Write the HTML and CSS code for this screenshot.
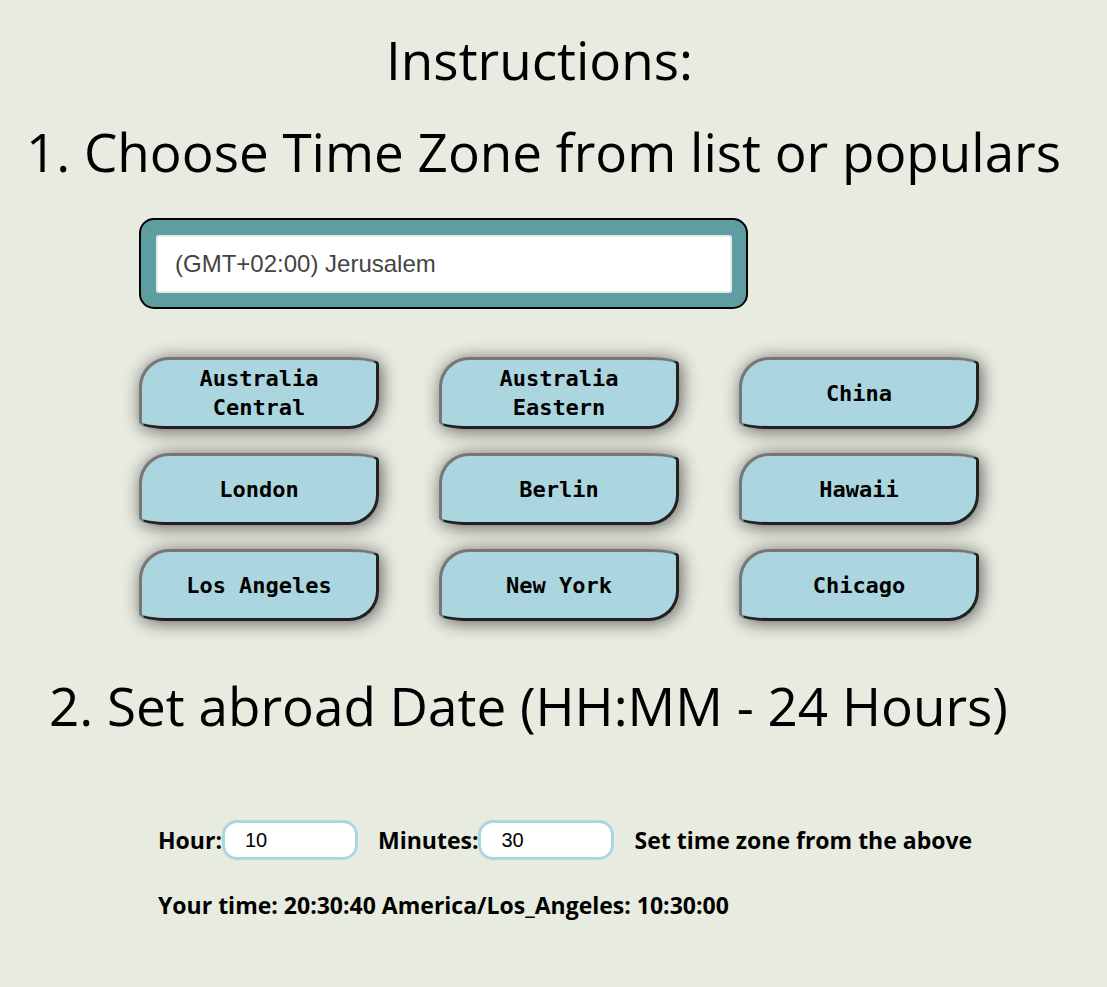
FILE: index.html
```html
<!DOCTYPE html>
<html lang="en">
<head>
<meta charset="utf-8">
<title>Time Zone Converter</title>
<link rel="stylesheet" href="styles.css">
</head>
<body>
<main class="page">
  <h1 class="heading heading-main">Instructions:</h1>
  <h2 class="heading heading-choose">1. Choose Time Zone from list or populars</h2>
  <div class="picker">
    <select class="zone-select" aria-label="Time zone">
      <option>(GMT+02:00) Jerusalem</option>
    </select>
  </div>
  <div class="zones">
    <button class="zone" type="button">Australia Central</button>
    <button class="zone" type="button">Australia Eastern</button>
    <button class="zone" type="button">China</button>
    <button class="zone" type="button">London</button>
    <button class="zone" type="button">Berlin</button>
    <button class="zone" type="button">Hawaii</button>
    <button class="zone" type="button">Los Angeles</button>
    <button class="zone" type="button">New York</button>
    <button class="zone" type="button">Chicago</button>
  </div>
  <h2 class="heading heading-set">2. Set abroad Date (HH:MM - 24 Hours)</h2>
  <form class="time-form">
    <label class="field">Hour:<input class="time-input" type="text" value="10"></label>
    <label class="field">Minutes:<input class="time-input" type="text" value="30"></label>
    <span>Set time zone from the above</span>
  </form>
  <p class="result">Your time: 20:30:40 America/Los_Angeles: 10:30:00</p>
</main>
</body>
</html>
```
FILE: styles.css
```css
* { box-sizing: border-box; }
body {
  margin: 0;
  background: #e8ebe0;
  color: #000;
  font-family: "Open Sans", "Noto Sans", sans-serif;
}
.page { padding: 14px 20px 64px; }
.heading {
  margin: 0;
  font-size: 53px;
  font-weight: 400;
  line-height: 92px;
  text-align: center;
  white-space: nowrap;
}
.heading-main { padding-right: 28px; }
.heading-choose { padding-right: 20px; }
.heading-set { margin-top: 39px; padding-right: 50px; }
.picker {
  width: 609px;
  max-width: 100%;
  margin: 20px 0 0 119px;
  padding: 15px 14px 14px 15px;
  border: 2px solid #000;
  border-radius: 15px;
  background: #5f9ea0;
}
.zone-select {
  display: block;
  width: 100%;
  height: 58px;
  padding: 0 17px 2px;
  border: 2px solid #e6ebe8;
  border-radius: 3px;
  appearance: none;
  background: #fff;
  color: #444;
  font: 24px "Liberation Sans", sans-serif;
}
.zones {
  display: grid;
  grid-template-columns: repeat(3, 240px);
  gap: 24px 60px;
  margin: 48px 0 0 119px;
}
.zone {
  height: 72px;
  padding: 0 40px;
  border: 3px solid;
  border-color: #767676 #212121 #212121 #767676;
  border-radius: 30px / 30px 7px;
  background: #acd6df;
  box-shadow: 2px 2px 18px rgba(0, 0, 0, 0.6);
  color: #000;
  font: bold 22px/29px "DejaVu Sans Mono", monospace;
}
.time-form {
  display: flex;
  align-items: center;
  gap: 20px;
  margin: 68px 0 0 138px;
  font-size: 23px;
  font-weight: 700;
}
.field { display: flex; align-items: center; }
.time-input {
  width: 136px;
  height: 40px;
  padding: 0 20px;
  border: 3px solid #acd6df;
  border-radius: 15px;
  background: #fff;
  font: 20px "Liberation Sans", sans-serif;
}
.result {
  margin: 29px 0 0 138px;
  font-size: 23px;
  font-weight: 700;
  line-height: 32px;
}
```
